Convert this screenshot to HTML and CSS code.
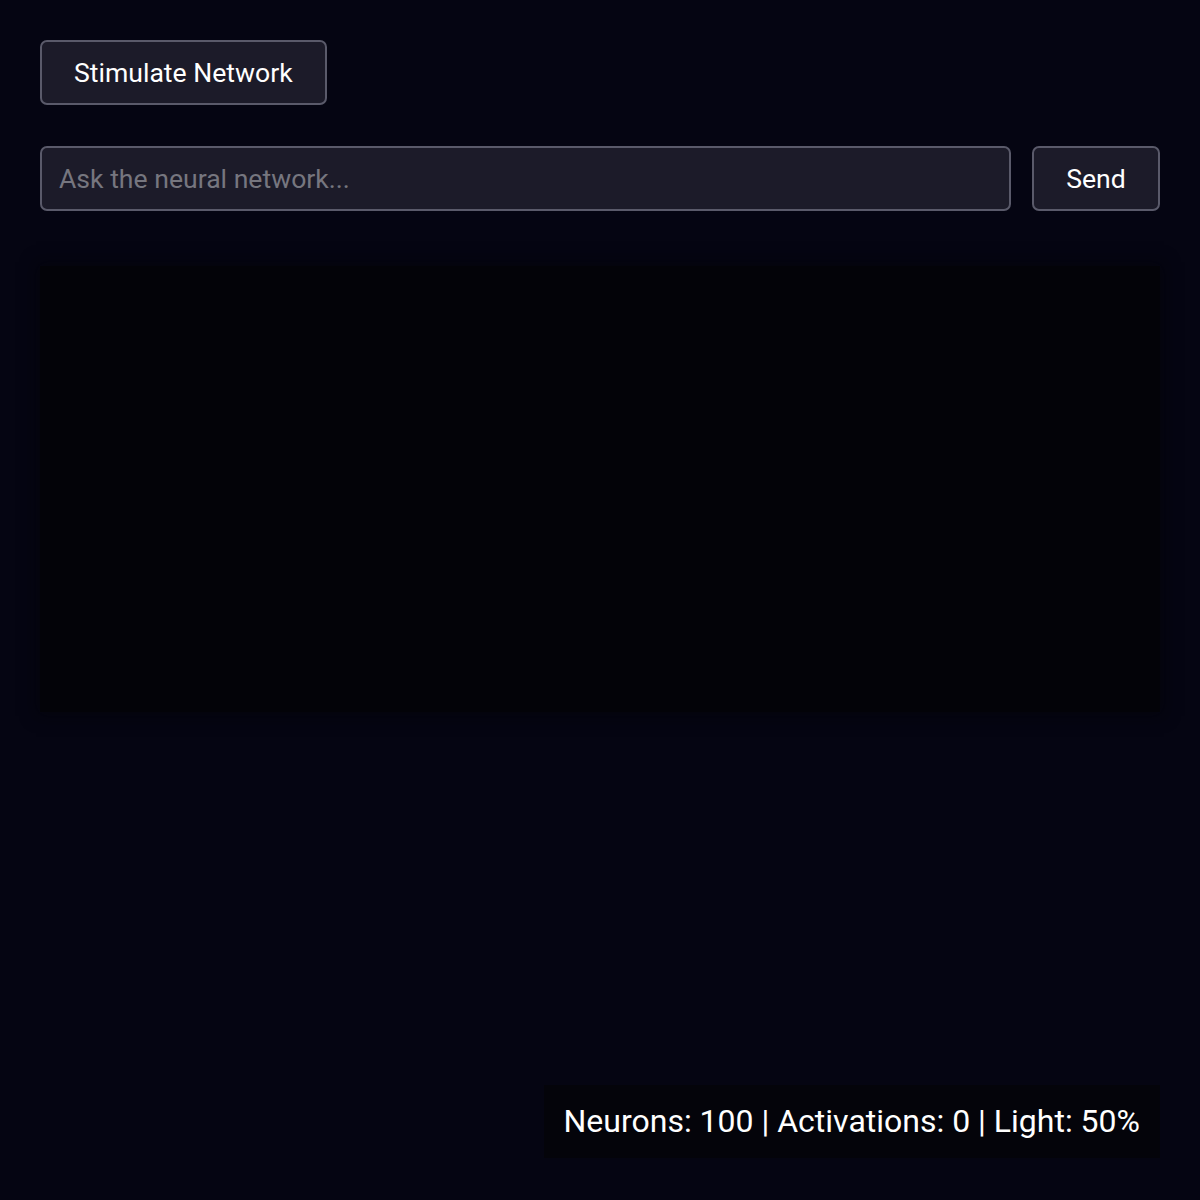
FILE: index.html
```html
<!DOCTYPE html>
<html lang="en">
<head>
<meta charset="utf-8">
<title>Neural Network</title>
<link rel="stylesheet" href="styles.css">
</head>
<body>
<main class="app">
  <div class="toolbar">
    <button class="btn">Stimulate Network</button>
  </div>
  <div class="ask-row">
    <input class="ask-input" type="text" placeholder="Ask the neural network...">
    <button class="btn btn-send">Send</button>
  </div>
  <div class="canvas-panel"></div>
</main>
<div class="status">Neurons: 100 | Activations: 0 | Light: 50%</div>
</body>
</html>
```
FILE: styles.css
```css
* { box-sizing: border-box; }
html, body {
  margin: 0;
  background: #050512;
  height: 100%;
}
body {
  font-family: Roboto, "Noto Sans", Arial, sans-serif;
  color: #ffffff;
}
.app {
  padding: 40px;
  display: flex;
  flex-direction: column;
}
.toolbar {
  display: flex;
}
.btn {
  font-family: Roboto, "Noto Sans", Arial, sans-serif;
  font-size: 26.6px;
  line-height: 31px;
  color: #ffffff;
  background: #1c1b29;
  border: 2px solid #5a5a6a;
  border-radius: 7px;
  padding: 15px 32px;
  height: 65px;
  cursor: pointer;
}
.ask-row {
  margin-top: 41px;
  display: flex;
  gap: 21px;
}
.ask-input {
  flex: 1;
  height: 65px;
  font-family: Roboto, "Noto Sans", Arial, sans-serif;
  font-size: 26.6px;
  color: #ffffff;
  background: #1c1b29;
  border: 2px solid #5a5a6a;
  border-radius: 7px;
  padding: 0 17px;
  outline: none;
}
.ask-input::placeholder {
  color: #76767f;
}
.btn-send {
  width: 128px;
  padding: 15px 0;
}
.canvas-panel {
  margin-top: 55px;
  height: 446px;
  background: #030308;
  box-shadow: 0 0 14px 4px rgba(3, 3, 8, 0.5);
}
.status {
  position: fixed;
  right: 40px;
  bottom: 42px;
  padding: 0 20px;
  height: 73px;
  line-height: 73px;
  font-size: 32px;
  color: #ffffff;
  background: #04040a;
}
```
